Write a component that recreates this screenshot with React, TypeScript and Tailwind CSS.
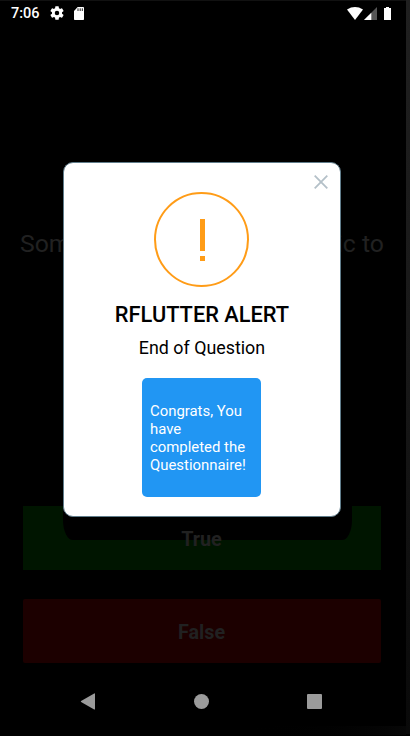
import React from "react";

function StatusBar() {
  return (
    <header className="flex h-[24px] shrink-0 items-center pl-[11px] pr-[11px] text-white">
      <span className="w-[39px] pt-[2px] text-[14.5px] font-medium leading-[24px]">7:06</span>
      <svg className="h-[14px] w-[14px]" viewBox="2 2 20 20" fill="currentColor">
        <path d="M19.14 12.94c.04-.3.06-.61.06-.94s-.02-.64-.07-.94l2.03-1.58a.5.5 0 0 0 .12-.61l-1.92-3.32a.5.5 0 0 0-.59-.22l-2.39.96a7 7 0 0 0-1.62-.94l-.36-2.54a.48.48 0 0 0-.48-.41h-3.84a.48.48 0 0 0-.47.41l-.36 2.54c-.59.24-1.13.57-1.62.94l-2.39-.96a.48.48 0 0 0-.59.22L2.74 8.87a.48.48 0 0 0 .12.61l2.03 1.58a6 6 0 0 0-.02 1.88l-2.03 1.58a.5.5 0 0 0-.12.61l1.92 3.32c.12.22.37.29.59.22l2.39-.96c.5.38 1.03.7 1.62.94l.36 2.54c.05.24.24.41.48.41h3.84c.24 0 .44-.17.47-.41l.36-2.54a7 7 0 0 0 1.62-.94l2.39.96c.22.08.47 0 .59-.22l1.92-3.32a.48.48 0 0 0-.12-.61zM12 15.2a3.2 3.2 0 1 1 0-6.4 3.2 3.2 0 0 1 0 6.4z" />
      </svg>
      <svg className="ml-[10px] h-[13px] w-[10px]" viewBox="0 0 10 13">
        <path d="M3.7 0H9.2Q10 0 10 .8V12.2Q10 13 9.2 13H.8Q0 13 0 12.2V4Z" fill="#fff" />
        <path d="M4 1.3V4M6.2 1.3V4M8.3 1.3V4" stroke="#222" strokeWidth="1" />
      </svg>
      <svg className="ml-auto h-[13px] w-[16px]" viewBox="0 0 16 13">
        <path d="M0 2.5Q8-2.4 16 2.5L8 13Z" fill="#fff" />
      </svg>
      <svg className="ml-[1px] h-[13px] w-[13px]" viewBox="0 0 13 13">
        <path d="M13 0V13H0Z" fill="#555" />
        <path d="M7.3 5.7V13H0Z" fill="#fff" />
      </svg>
      <svg className="ml-[7px] mr-[4px] h-[13px] w-[7px]" viewBox="0 0 7 13">
        <path d="M2 0H5V1H7V13H0V1H2Z" fill="#fff" />
      </svg>
    </header>
  );
}

function NavigationBar() {
  return (
    <nav className="mt-[30px] flex h-[17px] shrink-0 items-center text-[#9b9b9b]">
      <svg className="ml-[80px] h-[17px] w-[16px]" viewBox="0 0 16 17" fill="currentColor">
        <path d="M14.2.4Q15 0 15 .9V15.9Q15 16.8 14.2 16.4L1.1 9Q.4 8.5 1.1 8Z" />
      </svg>
      <span className="ml-[98px] size-[15px] rounded-full bg-[#9b9b9b]" />
      <span className="ml-[98px] size-[15px] rounded-[1px] bg-[#9b9b9b]" />
    </nav>
  );
}

function AlertDialog() {
  return (
    <section
      role="dialog"
      className="absolute left-[63px] top-[162px] flex h-[355px] w-[278px] flex-col items-center rounded-[10px] border border-[#607d8b] bg-white text-black"
    >
      <button aria-label="Close" className="mr-[12.5px] mt-[11.5px] self-end">
        <svg className="size-[14px]" viewBox="0 0 14 14">
          <path d="M.7.7 13.3 13.3M13.3.7.7 13.3" stroke="#b4c0c8" strokeWidth="1.8" />
        </svg>
      </button>
      <div className="mr-px mt-[3px] flex size-[95px] shrink-0 flex-col items-center rounded-full border-2 border-[#ff9c17]">
        <span className="ml-px mt-[25px] h-[32px] w-[5px] bg-[#ff9c17]" />
        <span className="ml-px mt-[5px] h-[5px] w-[5px] bg-[#ff9c17]" />
      </div>
      <h1 className="mt-[13.5px] whitespace-nowrap text-[21.8px] font-medium leading-[30px]">RFLUTTER ALERT</h1>
      <p className="mt-[6px] whitespace-nowrap text-[17.85px] leading-[24px]">End of Question</p>
      <button className="mr-px mt-[18px] flex h-[119px] w-[119px] shrink-0 items-center rounded-[5px] bg-[#2196f3] pl-[8px] text-left text-[14.9px] leading-[18px] text-white">
        <span className="whitespace-nowrap">
          Congrats, You
          <br />
          have
          <br />
          completed the
          <br />
          Questionnaire!
        </span>
      </button>
    </section>
  );
}

export default function App() {
  return (
    <div className="relative flex h-[736px] w-[410px] overflow-hidden bg-black font-['Roboto',sans-serif]">
      <div className="flex w-[406px] shrink-0 flex-col border-t border-[#111111]">
        <StatusBar />
        <main className="flex flex-col">
          <p className="mt-[203px] w-[404px] whitespace-nowrap text-center text-[24.8px] leading-[32px] text-[#212121]">
            Some cats are actually allergic to
          </p>
          <button className="relative ml-[23px] mt-[246px] h-[64px] w-[358px] bg-[#001500] pr-px pt-[3px] text-[19.8px] font-bold text-[#212121]">
            <span className="absolute left-[40px] top-0 h-[34px] w-[289px] rounded-b-[10px_20px] bg-black" />
            <span className="relative">True</span>
          </button>
          <button className="ml-[23px] mt-[29px] h-[64px] w-[358px] rounded-[2px] bg-[#1c0000] pr-px pt-[3px] text-[19.8px] font-bold text-[#212121]">
            False
          </button>
        </main>
        <NavigationBar />
        <div className="ml-[230px] mt-[16px] h-[9px] bg-gradient-to-r from-black to-[#070707]" />
      </div>
      <div className="h-[734px] w-[4px] bg-gradient-to-b from-[#202020] via-[#181818] to-[#090909]" />
      <AlertDialog />
    </div>
  );
}
